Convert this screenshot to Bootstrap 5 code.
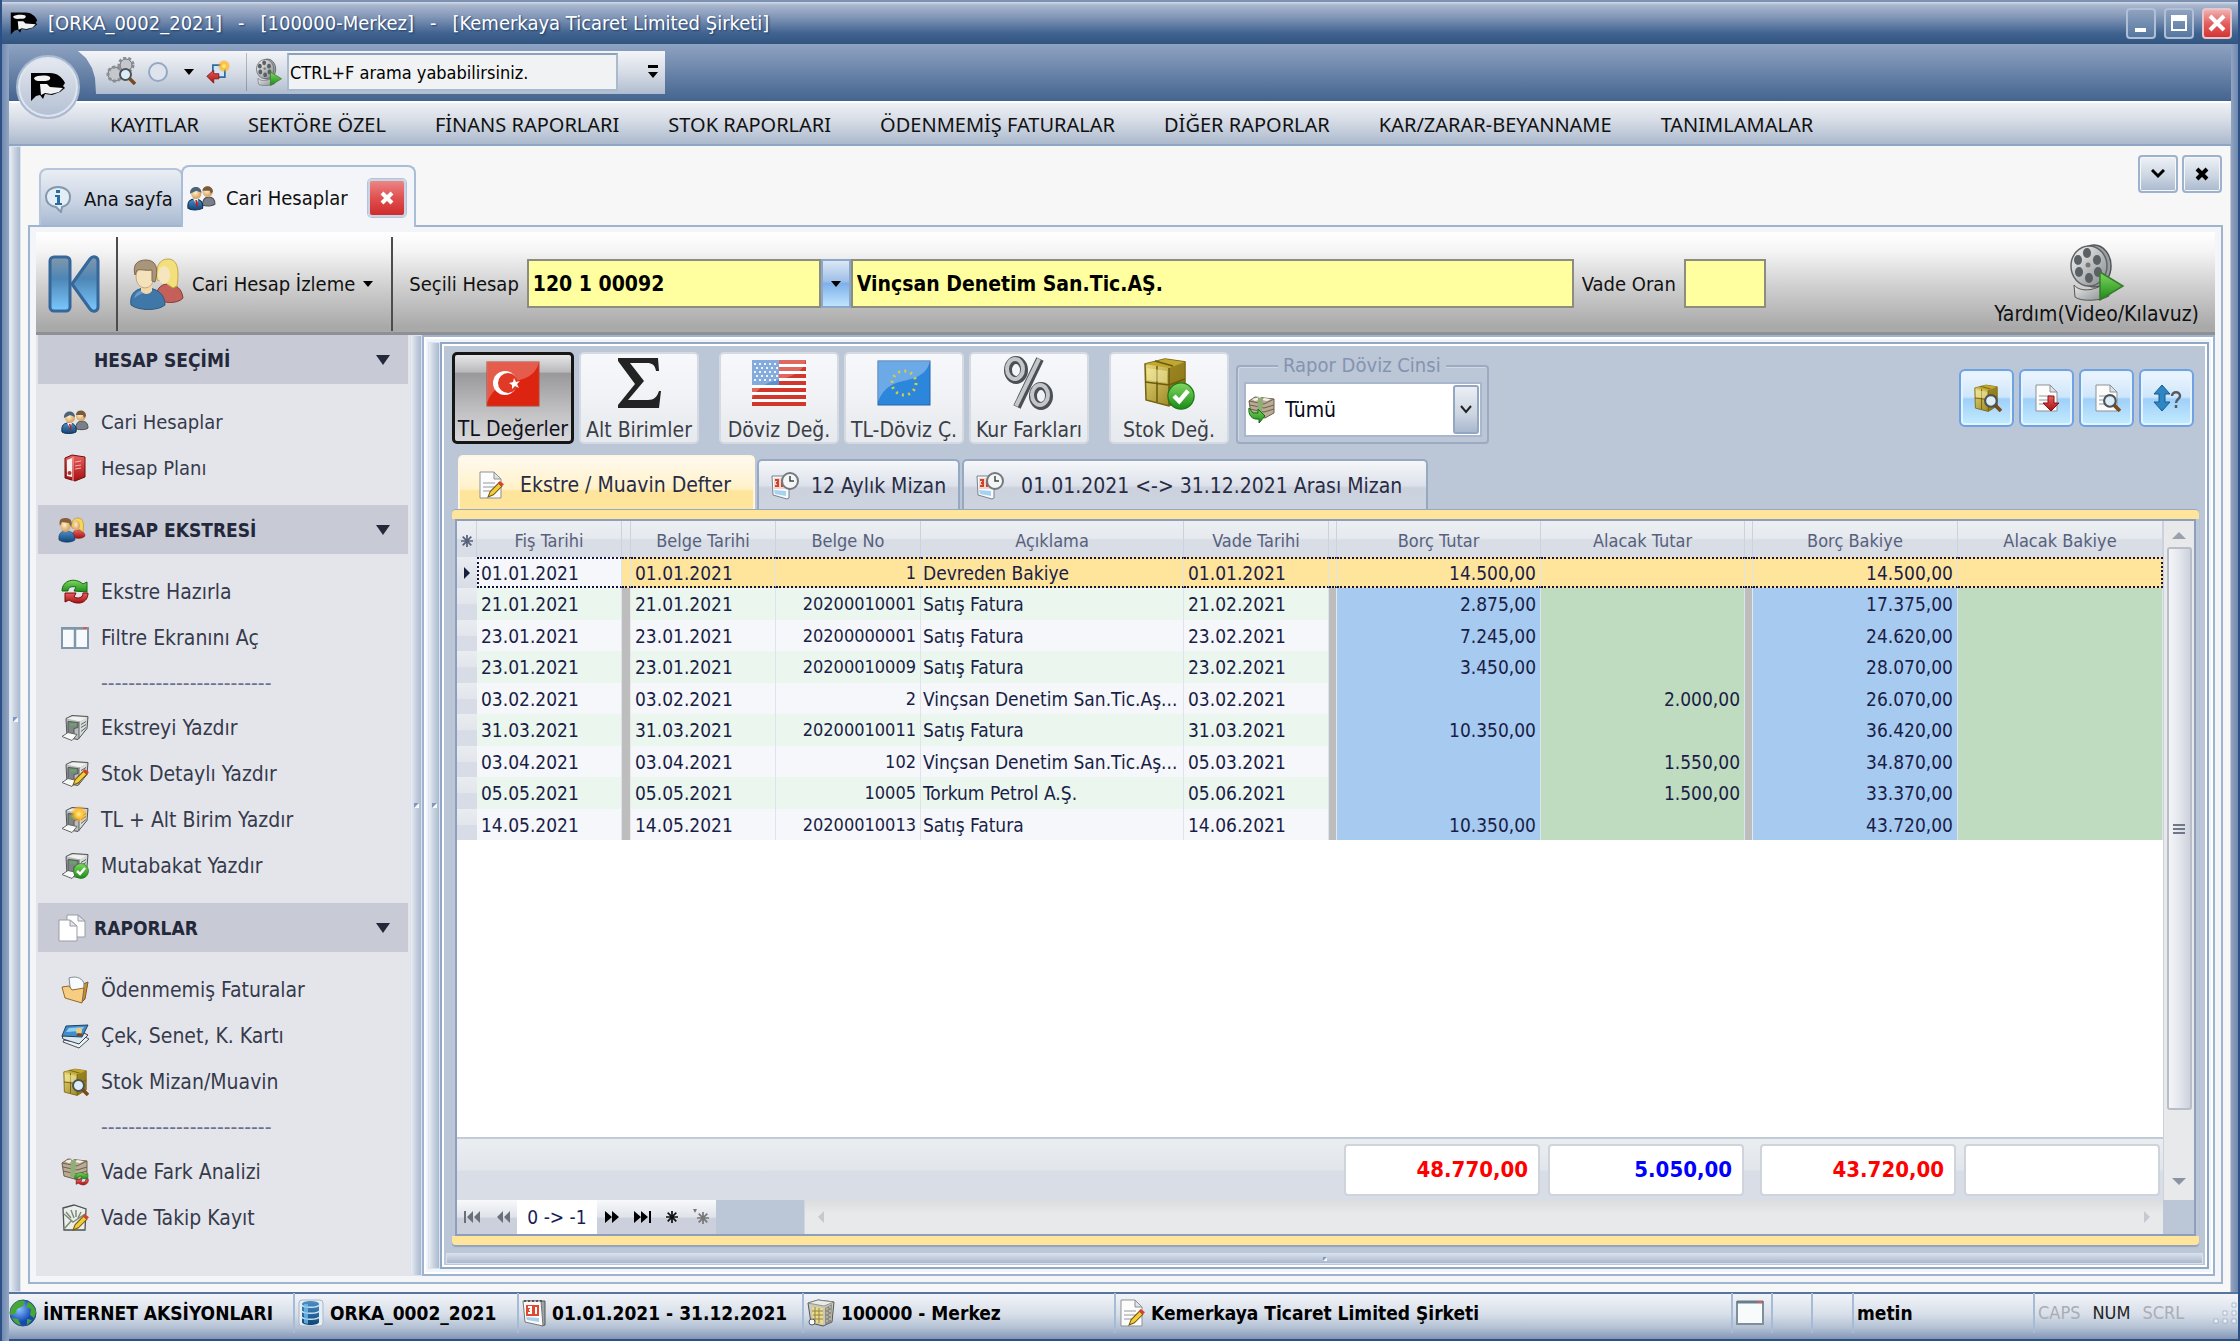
<!DOCTYPE html>
<html lang="tr">
<head>
<meta charset="utf-8">
<meta name="viewport" content="width=device-width, initial-scale=1">
<title>Cari Hesaplar</title>
<link href="https://cdn.jsdelivr.net/npm/bootstrap@5.3.0/dist/css/bootstrap.min.css" rel="stylesheet">
<style>
:root{--line:#93a9c6;--ui:"DejaVu Sans Condensed","DejaVu Sans",sans-serif}
body{font-family:var(--ui);font-size:20px;line-height:24px;color:#111;background:#8ba0be}
svg{display:block;flex:none}
button,input,select{font-family:inherit}
button{padding:0;color:inherit}
a{color:inherit;text-decoration:none}
.win{min-height:100vh;border-left:2px solid #2c5085;border-right:2px solid #2c5085;background:linear-gradient(90deg,#6f89b0,#92a5c1 7px,#92a5c1 calc(100% - 7px),#6f89b0)}
.titlebar{height:44px;border-top:2px solid #7d91b3;background:linear-gradient(#d3dbe8 0,#a9b7ce 3px,#8397b8 35%,#3f628f 75%,#31557f 100%);color:#fff;text-shadow:1px 1px 2px #1c3b66;padding:0 6px 0 8px;gap:8px;white-space:nowrap}
.titleparts{gap:16px;padding-left:2px}
.winbtn{width:30px;height:31px;border:2px solid #aebfd6;border-radius:4px;background:linear-gradient(#8fa2bf,#56779f);display:grid;place-items:center}
.winbtn.close-x{background:linear-gradient(#f0b0b0,#e26060 50%,#d33434);border-color:#e9c4ca}
.inner{margin:0 7px}
.topbar{height:57px;background:linear-gradient(#8fa3c2,#44648f);position:relative;padding:7px 0 6px 69px}
.orb{position:absolute;left:7px;top:11px;width:64px;height:64px;border-radius:50%;border:2px solid #a9bad1;background:linear-gradient(#e6eaf1,#ccd4e1 50%,#b3c0d3);box-shadow:inset 0 0 0 2px #dfe5ee;display:grid;place-items:center;z-index:3}
.quick{height:43px;width:587px;background:linear-gradient(#f3f5f8,#d3d9e3 55%,#afbccf);clip-path:polygon(0 0,100% 0,100% 100%,18px 100%,17px 27px,14px 17px,8px 7px);padding:2px 0 3px 28px}
.quick input{width:331px;height:38px;border:2px solid #a8bace;border-top-color:#8aa2c2;background:#f0f2f3;font-size:18px;padding:0 1px;color:#000}
.caret{width:0;height:0;border:5px solid transparent;border-top:6px solid #000;border-bottom:0}
.menubar{height:45px;border-top:2px solid #fff;border-bottom:2px solid #8ea5c4;background:linear-gradient(#eef1f5,#d5dbe5 45%,#abb9cd);padding:3px 0 0 101px;gap:49px;font-family:"Noto Sans",sans-serif;font-size:20px;color:#111}
.strip{width:12px;background:linear-gradient(90deg,#e9eef5,#d3dbe6 30%,#a9b9cf);border:1px solid #dbe3ee;flex:none;display:flex;align-items:center;justify-content:center}
.strip::after{content:"";width:5px;height:5px;border:2px solid #f6f9fc;border-top-color:#7f98bb;border-left-color:#7f98bb}
.work{background:#f7f7f7;padding:0 7px 8px;border-right:1px solid #c9cccf}
.doctabs{height:79px;padding-left:11px}
.doctab{border:2px solid #b5c5da;border-bottom:0;border-radius:8px 8px 0 0;height:57px;width:144px;background:linear-gradient(#eaeef4,#cbd5e4 55%,#a9bad2);padding:2px 0 0 3px;gap:12px}
.doctab.on{height:62px;width:235px;background:#f3f5f8;margin:0 0 -2px -2px;padding-left:4px;gap:10px;position:relative;border-color:#aabdd6}
.doctools{padding:9px 1px 0 0;gap:4px}
.tclose{width:38px;height:38px;border:2px solid #c9d3e2;border-radius:4px;background:linear-gradient(#ec8585,#e05050 50%,#cf2c2c);box-shadow:0 0 0 1px #b4c3d7;display:grid;place-items:center}
.tool2{width:40px;height:38px;border:2px solid #9fb2cc;border-radius:4px;background:linear-gradient(#eef1f6,#cdd6e3 55%,#a9b9cf);box-shadow:inset 0 0 0 1px #f5f7fa;display:grid;place-items:center}
.panel{border:2px solid #9fb4cf;background:#f3f5f8;padding:5px 6px 6px}
.toolstrip{height:103px;background:linear-gradient(#fff 0,#f4f4f4 20%,#cfcfcf 55%,#a9a9a9 95%);border-bottom:3px solid #8e9093;padding-top:3px}
.vline{width:2px;height:94px;background:#4c4c4c}
.yin{height:49px;border:2px solid #8c8c80;background:#ffff9f;font-weight:700;font-size:21px;padding:0 4px;color:#000}
.combo-btn{width:30px;height:49px;border:2px solid #8aa6c9;background:linear-gradient(#dbe7f5,#9fc0e8 45%,#7eb0ea 50%,#bfe4fd);display:grid;place-items:center}
.pickbtn{margin-right:2px}
.helptext{font-size:21px}
.side{width:374px;background:#e4e5eb;padding:0 2px 0 2px;color:#363b4c;flex:none}
.side h2{height:49px;margin:0;background:#c8cad6;font-size:19px;font-weight:700;color:#23283a;padding:0 18px 0 20px;line-height:24px}
.side h2 .ic{width:36px}
.side h2 .caret{border-width:10px 7px 0;border-top-color:#23283a}
.side ul{list-style:none;margin:0;padding:15px 0 14px 23px}
.side li{height:46px;display:flex;align-items:center;font-size:21px}
.side ul.first li{font-size:20px}
.side li a{display:flex;align-items:center;gap:12px}
.side li.dash{padding-left:40px;color:#6a7090;height:44px}
.box1{border:2px solid #9db3cf;background:#f1f4f8;padding:5px 4px 5px 4px;box-shadow:inset 0 0 0 2px #fff}
.box2{border:2px solid #8fa8c6;box-shadow:inset 0 0 0 2px #fff;background:#bbc6d7;padding:8px 8px 3px 10px}
.bigs{gap:5px}
.big{width:120px;height:92px;border:2px solid #d5dae2;border-radius:5px;background:linear-gradient(#f6f8fb,#f0f2f5 50%,#e6e9ed);font-size:21px;color:#3b3f47;display:flex;flex-direction:column;align-items:center;justify-content:space-between;white-space:nowrap;line-height:24px}
.big.on{width:122px;border:3px solid #161616;background:linear-gradient(#e6e6e8,#b9b9bb 20%,#99999b 21%,#c4c4c6 70%,#d8d8da);color:#101020}
.big.grp{margin-left:15px}
.big .pic{height:58px;display:grid;place-items:center}
fieldset.fx{border:2px solid #9dabc2;border-radius:4px;width:253px;height:79px;margin:13px 0 0 2px;box-shadow:inset 1px 1px 0 #cfd8e5;padding:15px 0 0 6px;position:relative}
fieldset.fx legend{position:absolute;top:-14px;left:40px;width:auto;margin:0;padding:0 5px;font-size:20px;line-height:24px;color:#8593b0;background:#bbc6d7;float:none}
.selwrap{position:relative;width:238px}
.selwrap select{appearance:none;width:238px;height:55px;border:2px solid #a9b7cc;background:#fff;font-size:21px;padding:0 0 0 39px;color:#0a0a20;border-radius:0}
.selwrap .lft{position:absolute;left:4px;top:14px;pointer-events:none}
.selwrap .rgt{position:absolute;right:3px;top:3px;width:26px;height:49px;pointer-events:none;border:2px solid #93a6c2;border-radius:3px;background:linear-gradient(#eceff4,#ccd5e1 60%,#a9b8ce);display:grid;place-items:center}
.sqs{gap:5px;padding:17px 5px 0 0}
.sq{width:55px;height:58px;border:2px solid #6ea2e2;border-radius:6px;background:linear-gradient(#eef6fe,#cfe6fb 48%,#9fd0fa 52%,#c4ecff);box-shadow:inset 0 0 0 2px #e3f3ff;display:grid;place-items:center}
.gtabs{margin-top:11px;padding-left:6px}
.gtab{height:51px;border:2px solid #97a8c3;border-bottom:0;border-radius:5px 5px 0 0;background:linear-gradient(#f5f7f9,#dde1ea 50%,#ccd1de 55%,#cdd3df);font-size:21px;color:#272c44;padding:0 12px;gap:12px;white-space:nowrap;margin-left:2px}
.gtab.on{height:55px;background:linear-gradient(#fffaf0,#fff1c8 60%,#ffe49c 64%);border-color:#fff6dd;margin:0;padding:3px 22px 0 18px;gap:16px}
.gtab.wide{padding-right:24px;gap:17px}
.gframe{border-top:9px solid #ffe49c;border-bottom:9px solid #ffe49c;border-radius:4px;box-shadow:0 -1px 0 #97a8c3,0 2px 1px #94a4bf}
.gbox{border:2px solid #8f9fbb;margin:0 3px;background:#fff}
table.grid{table-layout:fixed;width:100%;border-collapse:separate;border-spacing:0;font-size:18px;line-height:22px;color:#1a1e46}
.grid th{height:36px;font-weight:400;text-align:center;color:#56617c;background:linear-gradient(#eceff2,#e6e9ee 48%,#d9dde6 52%);padding:3px 0 0;border-right:1px solid #cdd3de}
.grid td{height:31px;padding:0 4px;white-space:nowrap;overflow:hidden;background:#f5f7fa;border-right:1px solid #dfe3ec}
.grid tr:nth-child(even) td{height:32px;background:#ebf6ee}
.grid tr td.gap{background:#bdbdbd;padding:0;border-color:#e8e8e8}
.grid tr td:first-child{background:linear-gradient(#e9ecf0,#e2e5eb 50%,#d8dce6 52%);padding:0;border:0}
.grid .d,.grid .n,.grid td:nth-child(6){font-size:19px}
.grid td:nth-child(6){padding:0 2px}
.grid .n,.grid .r{text-align:right}
.grid tr td.b{background:#a6caf0}.grid tr td.g{background:#c0dcc0}
.grid tr.sel td{background:#ffe49c;border-top:2px dotted #14143c;border-bottom:2px dotted #14143c}
.grid tr.sel td:first-child{background:linear-gradient(#e9ecf0,#d8dce6);border:0}
.grid tr.sel td.cur{background:#f5f7fa;border-left:2px dotted #14143c;padding-left:2px}
.grid tr.sel td:last-child{border-right:2px dotted #14143c}
.vscroll{flex:none;width:31px;background:#e8e9eb;border-left:1px solid #cdd2da;padding:11px 0 8px}
.vthumb{flex:1;width:25px;border:2px solid #b9bdc8;border-radius:3px;background:linear-gradient(90deg,#f4f5f8,#e3e6ec 50%,#ccd1dd);display:grid;place-items:center}
.tri{width:0;height:0;border:7px solid transparent}
.tri.up{border-bottom-color:#9aa0ac;margin-top:-7px}
.tri.down{border-top-color:#8b93a4;margin-top:60px}
.sum{height:63px;border-top:2px solid #c3cbda;background:linear-gradient(#eaeef1,#e2e6eb 50%,#d9dde6 53%);padding-right:3px}
.sumbox{height:52px;width:196px;border:2px solid #cfd3dc;border-radius:4px;background:#fff;font-weight:700;font-size:22px;color:#f00;text-align:right;padding:0 10px;line-height:48px}
.sumbox.credit{color:#00f}
.navrow{height:34px;background:#bbc6d7}
.navg{width:259px;background:linear-gradient(#f8f9fb,#dfe3ea 50%,#cbd0dc 54%)}
.navg .prev{width:60px}
.navg span.pos{background:#fff;width:80px;font-size:19px;line-height:34px;text-align:center;color:#16205a}
.hscroll{background:linear-gradient(#dcdddf,#e8e9eb 40%);border-left:1px solid #d3d6dc;padding:0 12px;margin:0 31px 0 88px}
.hsplit{height:11px;margin:8px -4px 0 -6px;background:linear-gradient(#d7deea,#a9b8ce);border:1px solid #d9e0ea;display:grid;place-items:center}
.hsplit::after{content:"";width:4px;height:4px;border:2px solid #f6f9fc;border-top-color:#7f98bb;border-left-color:#7f98bb}
.status{height:49px;border-top:2px solid #55749f;border-bottom:2px solid #2c5085;background:linear-gradient(#f2f4f8,#d8dfe9 45%,#b3c1d4 75%,#8296b6);font-weight:700;font-size:19px;color:#000;padding-bottom:7px;margin-right:-7px}
.status .seg{height:40px;border-left:2px solid #a6bbd5;padding-left:3px;display:flex;align-items:center;gap:6px;white-space:nowrap}
.status .keys{font-weight:400;font-size:18px;gap:12px;color:#a9adb5}
.status .keys .lit{color:#222}
</style>
<script src="https://cdn.jsdelivr.net/npm/bootstrap@5.3.0/dist/js/bootstrap.bundle.min.js"></script>
</head>
<body>
<svg width="0" height="0" class="position-absolute" aria-hidden="true">
<defs>
<linearGradient id="gBlue" x2="0" y2="1"><stop stop-color="#4f8fc4"/><stop offset="1" stop-color="#0f4478"/></linearGradient>
<linearGradient id="gRed" x2="0" y2="1"><stop stop-color="#e86060"/><stop offset="1" stop-color="#a51010"/></linearGradient>
<linearGradient id="gGreen" x2="0" y2="1"><stop stop-color="#7fd860"/><stop offset="1" stop-color="#1c8a18"/></linearGradient>
<linearGradient id="gMetal" x2="1" y2="1"><stop stop-color="#f6f7f7"/><stop offset="1" stop-color="#85898c"/></linearGradient>
<linearGradient id="gGold" x2="1" y2="1"><stop stop-color="#ecdf80"/><stop offset="1" stop-color="#8c7410"/></linearGradient>
<linearGradient id="gK" x2="0" y2="1"><stop stop-color="#8298ac"/><stop offset=".4" stop-color="#4d86b5"/><stop offset="1" stop-color="#7cc8ff"/></linearGradient>
<radialGradient id="gFace" cx=".4" cy=".4"><stop stop-color="#fff0c8"/><stop offset="1" stop-color="#dcaa6c"/></radialGradient>
<radialGradient id="gSun"><stop stop-color="#fff29a"/><stop offset=".5" stop-color="#ffc02c"/><stop offset="1" stop-color="#ff9a10" stop-opacity=".2"/></radialGradient>
<radialGradient id="gSea" cx=".35" cy=".35"><stop stop-color="#8cc4ff"/><stop offset="1" stop-color="#1648b8"/></radialGradient>
</defs>
<symbol id="orca" viewBox="0 0 36 30"><path fill="#000" d="M1 1h19c7 0 12 4 15 10l-2 3 2 2-5 4-8 3-7-1-2 5-3-4-4 1-5 5z"/><path fill="#f2f2f2" d="M4 6c3-3 13-3 16-1 1 3-2 4-6 4S5 10 4 6zM10 12l7 0 3 3 13 1-4 4-8 2-6-1-4 2z"/></symbol>
<symbol id="men" viewBox="0 0 28 24"><path fill="#7a8088" stroke="#4a4e54" d="M15 19c0-6 2-8 6-8s6 3 6 7c-2 2-8 2-12 1z"/><circle cx="20" cy="6" r="5" fill="url(#gFace)"/><path fill="#7a5a3a" d="M15 5c0-6 10-6 10 1l-2 2-1-3z"/><path fill="url(#gBlue)" stroke="#0c2f52" d="M1 22c-1-7 2-9 7-9s8 3 7 9c-4 2-11 2-14 0z"/><path fill="#f4f4f4" d="M6 13l3 5 2-5z"/><path fill="#c81818" d="M8 14h1.500l1 5-1.500 2z"/><circle cx="9" cy="8" r="5" fill="url(#gFace)"/><path fill="#4c6478" d="M3 8C2 0 14-1 14 7l-5-2z"/></symbol>
<symbol id="pair" viewBox="0 0 28 26"><path fill="url(#gRed)" stroke="#8a1a12" stroke-width=".5" d="M14 20c0-5 2-7 6-7s7 3 7 6c-2 3-9 3-13 1z"/><path fill="#f5d75a" stroke="#b8932a" stroke-width=".7" d="M14 11c-1-7 2-10 6-10 6 0 6 7 5 14l-4-3z"/><ellipse cx="18.500" cy="8.500" rx="3.500" ry="5" fill="url(#gFace)"/><path fill="url(#gBlue)" stroke="#0c2f52" stroke-width=".5" d="M1 23c-1-6 2-9 7-9 6 0 9 3 9 9-4 3-12 3-16 0z"/><ellipse cx="7.500" cy="9" rx="5" ry="6" fill="url(#gFace)"/><path fill="#86603a" d="M2 9C0 1 5 1 8 1c5 0 7 4 5 9L11 6 4 5z"/></symbol>
<symbol id="pairlg" viewBox="0 0 54 52"><path fill="#c4605a" stroke="#8a3a34" d="M26 40c0-8 4-14 12-14s14 5 15 14c-5 6-20 6-27 0z"/><path fill="#f3e07c" stroke="#c2a548" d="M27 22C25 8 30 1 38 1c11 0 11 14 9 27l-4 2-9-6z"/><ellipse cx="34" cy="17" rx="6" ry="9" fill="#f6e6c0"/><path fill="#3f78a8" stroke="#2c5b84" d="M1 47c-2-12 6-17 15-17 11 0 19 6 19 17-7 6-26 6-34 0z"/><path fill="#6c9cc6" d="M4 40c2-6 6-8 10-8l6 2c-8 0-12 4-16 6z"/><path fill="#f0d8ac" d="M11 27h11v6c-3 4-8 4-11 0z"/><ellipse cx="15" cy="19" rx="9" ry="11" fill="#f4e2bc" stroke="#c9a878"/><path fill="#a9957a" stroke="#7d6a50" d="M5 17C2 5 9 2 16 2c10 0 13 8 9 22l-3-1V12c-6 1-11-1-15 0z"/></symbol>
<symbol id="binder" viewBox="0 0 28 28"><path fill="url(#gRed)" stroke="#6f0d0d" d="M4 4l7-3 13 2v20l-10 4L4 24z"/><path fill="#f3f3f3" d="M6 6l5-2v19l-5-1z"/><path stroke="#ffb0b0" d="M14 8l6-1M14 12l6-1M14 15l6-1M12 3v24"/><circle cx="8.500" cy="19" r="2" fill="#a33"/></symbol>
<symbol id="sync" viewBox="0 0 28 26"><path fill="url(#gRed)" stroke="#7a0808" d="M27 14h-5c0 5-5 6-9 4l2-4H4v9l4-2c9 6 19 3 19-7z"/><path fill="url(#gGreen)" stroke="#156810" d="M1 12h6c0-4 4-5 8-4l-2 4 13 1V3l-4 2C14-2 1 1 1 12z"/></symbol>
<symbol id="cols" viewBox="0 0 28 24"><path fill="#f6fafc" stroke="#7f97a8" stroke-width="2" d="M1 2h26v20H1z"/><path stroke="#7f97a8" stroke-width="2.500" d="M14 3v19M1 2.500h26"/><path stroke="#e05a4a" stroke-width="2" d="M22 2h4"/></symbol>
<symbol id="prn" viewBox="0 0 28 27"><path fill="#b9bebc" stroke="#4f5656" d="M5 4l6-3 16 1-1 12-9 11-11-2z"/><path fill="#f0f2f1" d="M6 4l6-2 14 1-7 4z"/><path fill="#7d8684" stroke="#555" d="M7 7l10 1v5l-4 1v6l-6-1z"/><path fill="#d9dddb" d="M18 8l8-5-1 11-7 9z"/><path stroke="#5a6260" d="M18 7v17M20 10l5-3M20 13l5-3M20 17l5-4"/><path fill="#f8f9f9" stroke="#666" d="M1 22l6-4 9 2-5 6z"/><path fill="#5fae60" d="M9 9h6v2H9z"/></symbol>
<symbol id="pen" viewBox="0 0 16 16"><path fill="#f2cf3a" stroke="#7a5a10" d="M1 15l2-5 8-8 3 3-8 8z"/><path fill="#d8402c" d="M10 2l2-2 4 3-2 2z"/></symbol>
<symbol id="ok" viewBox="0 0 16 16"><circle cx="8" cy="8" r="7.500" fill="url(#gGreen)" stroke="#1b7a18" stroke-width=".7"/><path fill="none" stroke="#fff" stroke-width="2.500" d="M4 8l3 3 5-6"/></symbol>
<symbol id="docs" viewBox="0 0 28 28"><path fill="#fdfdfd" stroke="#999da4" d="M9 1h11l7 6v16H9z"/><path fill="#fff" stroke="#999da4" d="M1 6h11l7 6v15H1z"/><path fill="#e3e6ea" stroke="#999da4" d="M12 6v6h7zM20 1v6h7z"/></symbol>
<symbol id="fold" viewBox="0 0 28 28"><path fill="#c98f34" stroke="#7f5a1e" d="M20 9l7-3-3 17-4 4z"/><path fill="#f8fbfd" stroke="#7b8894" d="M8 2c6-2 12-1 15 5l-1 17-12-5z"/><path fill="#f6cd83" stroke="#94692a" d="M1 11l7-1 3 4 12-2-2 15L4 22z"/></symbol>
<symbol id="cards" viewBox="0 0 28 25"><path fill="#eef2f5" stroke="#49525a" d="M3 16l5 1 16-4 4 2-10 9L2 18z"/><path fill="#dbe8f0" stroke="#34424e" d="M1 12l22-3 4 2-9 9L2 15z"/><path fill="#3f8dca" stroke="#23405c" d="M5 2l22-1-6 12L1 12z"/><path fill="#8fd0f4" d="M8 4l15-1-3 4-15 1z"/><circle cx="18" cy="7" r="3" fill="#f3c978"/><path fill="#6d4a2a" d="M15 12l2-3 5 1-1 2z"/></symbol>
<symbol id="crate" viewBox="0 0 44 50"><path fill="url(#gGold)" stroke="#76620f" stroke-width="1.500" d="M2 7l20-5 20 3v34L26 49 3 43z"/><path fill="#c0a730" d="M2 7l20-5 20 3-16 6z"/><path fill="#8b7412" d="M26 11l16-6v34l-16 10z" opacity=".75"/><path fill="none" stroke="#6b5a10" stroke-width="1.500" d="M14 9v36M26 11v37M2 25l24 3 16-6M12 4l18 5"/><path fill="#fff8b8" opacity=".45" d="M4 11l20 3v12L4 23z"/></symbol>
<symbol id="lens" viewBox="0 0 18 18"><path stroke="#7a4a1a" stroke-width="3.500" d="M11 11l6 6"/><circle cx="7.500" cy="7.500" r="5.500" fill="#dbeef8" stroke="#4d5358" stroke-width="2"/></symbol>
<symbol id="cash" viewBox="0 0 28 28"><path fill="#b9ab94" stroke="#6c604c" d="M1 5l6-4 19 2v14l-9 5-14-4z"/><path stroke="#6c604c" fill="none" d="M2 9l14 3 10-3M2 13l14 3 10-3M1 5l15 3 10-5"/><path fill="#f3f0e8" d="M4 3l8-2 3 2-8 2zM16 2l7 1-4 2-5-1z"/><path fill="#8fae76" d="M10 2h5l-1 18-5-2z"/></symbol>
<symbol id="note" viewBox="0 0 28 28"><path fill="#eceeec" stroke="#4e5250" stroke-width="1.300" d="M2 4l11-3 12 4-1 21H3z"/><path stroke="#7c8c78" stroke-width="1.500" fill="none" d="M5 8l5 6M10 6l3 8M15 6v7M20 8l-3 6M3 10l9 8 12-8M3 25l8-9"/></symbol>
<symbol id="globe" viewBox="0 0 28 28"><circle cx="14" cy="14" r="13" fill="url(#gSea)" stroke="#28507a"/><path fill="#46a832" d="M5 5c3-4 9-4 11-3l-2 5-6 3-2 5-5 1c0-4 1-8 4-11zM19 3c4 1 7 6 8 10l-2 6-4-3 1-6-5-2zM3 19l6 1 3 6c-4 0-7-3-9-7zM18 20l5 1-5 5z"/></symbol>
<symbol id="db" viewBox="0 0 26 28"><rect x="1" y="1" width="24" height="26" rx="3" fill="#e6edf3" stroke="#a7b7c6"/><path fill="url(#gBlue)" d="M4 5c0-4 17-4 17 0v18c0 4-17 4-17 0z"/><path fill="none" stroke="#c4e6fa" stroke-width="1.500" d="M4 6c1 3 16 3 17 0M4 12c1 3 16 3 17 0M4 18c1 3 16 3 17 0"/><path fill="#7cc7f4" opacity=".7" d="M6 5h4v20l-4-1z"/></symbol>
<symbol id="cal" viewBox="0 0 24 28"><path fill="#9da4a8" stroke="#555" d="M3 2h20v24l-3 1z"/><path fill="#fafafa" stroke="#777" d="M1 2h18l2 25-18-4z"/><path fill="#de4a30" d="M4 6h13v11H4z"/><path fill="none" stroke="#fff" stroke-width="2" d="M6 8h3v6H6M7 11h2M14 8v7"/><path fill="#a8d0ee" d="M4 18l13 1v4L5 21z"/><path stroke="#555" stroke-dasharray="2 2" stroke-width="2" d="M2 2h20"/></symbol>
<symbol id="bldg" viewBox="0 0 28 28"><path fill="#c8c8bf" stroke="#55554e" d="M1 4l10-3 16 2-2 20-9 4-12-3z"/><path fill="#f0dc7c" d="M5 8l11 1v16l-10-2z"/><path stroke="#8a8358" d="M8 8v15M12 9v15M5 12h11M6 16h10M6 20h10"/><path fill="#8b8d8c" d="M18 9l7-4-1 18-6 3z"/><path stroke="#e6d489" stroke-dasharray="2 2" d="M20 9v16M23 7v15"/><path fill="#e9ebea" stroke="#77776e" stroke-width=".7" d="M1 4l10-3 16 2-10 4z"/><circle cx="5" cy="23" r="3" fill="#fafafa" stroke="#555"/></symbol>
<symbol id="page" viewBox="0 0 24 28"><path fill="#fcfcfc" stroke="#8d9196" d="M1 1h14l7 7v19H1z"/><path fill="#dfe3e6" stroke="#8d9196" d="M15 1v7h7z"/><path stroke="#b6babf" stroke-width="1.500" d="M4 12h12M4 16h12M4 20h8"/></symbol>
<symbol id="calclk" viewBox="0 0 28 28"><path fill="#f7fafc" stroke="#78828c" d="M1 4h17v22l-2 1-14-4z"/><path fill="#f3d4cc" d="M3 6h12v11H3z"/><path fill="none" stroke="#d0442e" stroke-width="2" d="M4 8h3v6H4M5 11h2M11 8v7"/><path fill="#a8d3f0" d="M3 18l12 1v5L4 22z"/><circle cx="19" cy="9" r="8" fill="#f3f5f6" stroke="#73797e" stroke-width="2"/><path fill="none" stroke="#444" stroke-width="1.500" d="M19 4v5h4"/></symbol>
<symbol id="film" viewBox="0 0 56 58"><path fill="url(#gMetal)" stroke="#555" d="M5 42c6 8 25 6 33-5l2 16c-8 5-28 6-34 1z"/><ellipse cx="25" cy="23" rx="17" ry="21" fill="#9b9fa1" stroke="#4f5355" stroke-width="1.500"/><ellipse cx="20" cy="23" rx="18" ry="20" fill="url(#gMetal)" stroke="#606466" stroke-width="1.500"/><g fill="#5a6064"><ellipse cx="18" cy="10" rx="4" ry="5"/><ellipse cx="28" cy="17" rx="4" ry="5"/><ellipse cx="9" cy="17" rx="4" ry="5"/><ellipse cx="10" cy="29" rx="4" ry="5"/><ellipse cx="20" cy="35" rx="4" ry="5"/><ellipse cx="29" cy="29" rx="4" ry="5"/></g><circle cx="19" cy="22" r="2.500" fill="#777"/><path fill="url(#gGreen)" stroke="#3a7a2e" stroke-width="1.500" d="M31 29l23 14-23 14z"/></symbol>
<symbol id="tri2" viewBox="0 0 14 12"><path d="M0 0l7 6-7 6zM7 0l7 6-7 6z"/></symbol>
<symbol id="star" viewBox="0 0 14 14"><path fill="none" stroke="currentColor" stroke-width="2" d="M7 0v14M0 7h14M2 2l10 10M12 2L2 12"/></symbol>
</svg>

<div class="win d-flex flex-column">
  <header class="titlebar d-flex align-items-center">
    <svg width="28" height="25"><use href="#orca"/></svg>
    <div class="titleparts d-flex flex-grow-1"><span>[ORKA_0002_2021]</span><span>-</span><span>[100000-Merkez]</span><span>-</span><span>[Kemerkaya Ticaret Limited Şirketi]</span></div>
    <button class="winbtn" aria-label="Küçült"><svg width="20" height="20"><path fill="#fff" d="M4 15h11v4H4z"/></svg></button>
    <button class="winbtn" aria-label="Büyüt"><svg width="18" height="18"><path fill="none" stroke="#fff" stroke-width="2" d="M2 2h14v14H2z"/><path fill="#fff" d="M1 1h16v6H1z"/></svg></button>
    <button class="winbtn close-x" aria-label="Kapat"><svg width="18" height="18"><path stroke="#fff" stroke-width="4" d="M2 2l14 14M16 2L2 16"/></svg></button>
  </header>

  <div class="inner d-flex flex-column flex-grow-1">
    <div class="topbar">
      <button class="orb" aria-label="Ana menü"><svg width="36" height="30"><use href="#orca"/></svg></button>
      <div class="quick d-flex align-items-center">
        <svg width="30" height="30" viewBox="0 0 30 30"><g fill="#c4c8cc" stroke="#6a6e72"><circle cx="20" cy="8" r="6"/><circle cx="9" cy="17" r="7"/></g><g fill="none" stroke="#8a8e92" stroke-dasharray="3 2" stroke-width="3"><circle cx="20" cy="8" r="7"/><circle cx="9" cy="17" r="7"/></g><svg x="12" y="10" width="18" height="18"><use href="#lens"/></svg></svg>
        <svg width="24" height="24" class="ms-2 me-3"><circle cx="14" cy="12" r="9" fill="#dfe4ec" stroke="#94a8c5" stroke-width="2"/></svg>
        <span class="caret"></span>
        <svg width="28" height="28" viewBox="0 0 28 28" class="ms-2 ps-1"><path fill="#cfe6f6" stroke="#2f6c9c" stroke-width="2" d="M8 6h14v14H8z"/><circle cx="21" cy="7" r="7" fill="url(#gSun)"/><path fill="url(#gRed)" stroke="#8c1010" d="M1 19l8-7v4h6v6H9v5z"/></svg>
        <span class="vr ms-3 me-2"></span>
        <svg width="28" height="28" class="me-1"><use href="#film"/></svg>
        <input type="text" aria-label="Arama" value="CTRL+F arama yababilirsiniz.">
        <svg width="16" height="16" class="ms-auto me-1"><path d="M3 1h10v3H3zM3 8h10l-5 6z"/></svg>
      </div>
    </div>
    <nav class="menubar d-flex align-items-center">
      <a href="#">KAYITLAR</a><a href="#">SEKTÖRE ÖZEL</a><a href="#">FİNANS RAPORLARI</a><a href="#">STOK RAPORLARI</a><a href="#">ÖDENMEMİŞ FATURALAR</a><a href="#">DİĞER RAPORLAR</a><a href="#">KAR/ZARAR-BEYANNAME</a><a href="#">TANIMLAMALAR</a>
    </nav>

    <div class="d-flex flex-grow-1">
      <div class="strip"></div>
      <div class="work flex-grow-1 d-flex flex-column">
        <div class="doctabs d-flex align-items-end">
          <a href="#" class="doctab d-flex align-items-center">
            <svg width="28" height="28" viewBox="0 0 28 28"><path fill="#e3edf5" stroke="#8398ab" stroke-width="2" d="M14 2c7 0 12 4 12 10s-4 9-8 10l-1 5-5-5C6 21 2 18 2 12S7 2 14 2z"/><path fill="#2a6da5" d="M12 5h4v3h-4zM11 10h5v8h2v2h-7v-2h2v-6h-2z"/></svg>
            <span>Ana sayfa</span></a>
          <div class="doctab on d-flex align-items-center">
            <svg width="29" height="26"><use href="#men"/></svg><span>Cari Hesaplar</span>
            <button class="tclose ms-auto me-2" aria-label="Sekmeyi kapat"><svg width="14" height="14"><path stroke="#fff" stroke-width="4" d="M2 2l10 10M12 2L2 12"/></svg></button>
          </div>
          <div class="doctools ms-auto align-self-start d-flex">
            <button class="tool2" aria-label="Sekme listesi"><svg width="14" height="10"><path fill="none" stroke="#000" stroke-width="3" d="M1 1l6 6 6-6"/></svg></button>
            <button class="tool2" aria-label="Kapat"><svg width="14" height="14"><path stroke="#000" stroke-width="4" d="M2 2l10 10M12 2L2 12"/></svg></button>
          </div>
        </div>

        <div class="panel flex-grow-1 d-flex flex-column">
          <div class="toolstrip d-flex align-items-center">
            <button class="border-0 bg-transparent px-2 ms-1 me-2" aria-label="İlk"><svg width="52" height="58" viewBox="0 0 52 58"><g fill="url(#gK)" stroke="#35679a" stroke-width="3" stroke-linejoin="round"><rect x="2" y="2" width="20" height="54" rx="4"/><path d="M24 29L42 4c3-4 8-2 8 2v46c0 4-5 6-8 2z"/></g></svg></button>
            <span class="vline"></span>
            <button class="border-0 bg-transparent d-flex align-items-center gap-2 ms-2 ps-1 pickbtn">
              <svg width="54" height="52"><use href="#pairlg"/></svg><span>Cari Hesap İzleme</span><span class="caret"></span></button>
            <span class="vline mx-3"></span>
            <label for="acc" class="me-2">Seçili Hesap</label>
            <input id="acc" class="yin" style="width:294px" value="120 1 00092">
            <button class="combo-btn" aria-label="Hesap seç"><span class="caret"></span></button>
            <input class="yin" style="width:723px" aria-label="Hesap adı" value="Vinçsan Denetim San.Tic.AŞ.">
            <label for="vo" class="mx-2">Vade Oran</label>
            <input id="vo" class="yin" style="width:82px">
            <button class="border-0 bg-transparent ms-auto me-3 d-flex flex-column align-items-center helptext"><svg width="56" height="60"><use href="#film"/></svg><span>Yardım(Video/Kılavuz)</span></button>
          </div>

          <div class="d-flex flex-grow-1">
            <aside class="side">
              <h2 class="d-flex align-items-center"><span class="ic"></span>HESAP SEÇİMİ<span class="caret ms-auto"></span></h2>
              <ul class="first">
                <li><a href="#"><svg width="28" height="24"><use href="#men"/></svg>Cari Hesaplar</a></li>
                <li><a href="#"><svg width="28" height="28"><use href="#binder"/></svg>Hesap Planı</a></li>
              </ul>
              <h2 class="d-flex align-items-center"><span class="ic"><svg width="28" height="26"><use href="#pair"/></svg></span>HESAP EKSTRESİ<span class="caret ms-auto"></span></h2>
              <ul>
                <li><a href="#"><svg width="28" height="28"><use href="#sync"/></svg>Ekstre Hazırla</a></li>
                <li><a href="#"><svg width="28" height="24"><use href="#cols"/></svg>Filtre Ekranını Aç</a></li>
                <li class="dash">-------------------------</li>
                <li><a href="#"><svg width="28" height="28"><use href="#prn"/></svg>Ekstreyi Yazdır</a></li>
                <li><a href="#"><svg width="28" height="28"><use href="#prn"/><use href="#pen" x="11" y="9" width="17" height="17"/></svg>Stok Detaylı Yazdır</a></li>
                <li><a href="#"><svg width="28" height="28"><use href="#prn"/><circle cx="18" cy="8" r="8" fill="url(#gSun)"/></svg>TL + Alt Birim Yazdır</a></li>
                <li><a href="#"><svg width="28" height="28"><use href="#prn"/><use href="#ok" x="12" y="11" width="16" height="16"/></svg>Mutabakat Yazdır</a></li>
              </ul>
              <h2 class="d-flex align-items-center"><span class="ic"><svg width="28" height="28"><use href="#docs"/></svg></span>RAPORLAR<span class="caret ms-auto"></span></h2>
              <ul>
                <li><a href="#"><svg width="28" height="28"><use href="#fold"/></svg>Ödenmemiş Faturalar</a></li>
                <li><a href="#"><svg width="28" height="25"><use href="#cards"/></svg>Çek, Senet, K. Kartı</a></li>
                <li><a href="#"><svg width="28" height="28"><use href="#crate"/><use href="#lens" x="10" y="10" width="18" height="18"/></svg>Stok Mizan/Muavin</a></li>
                <li class="dash">-------------------------</li>
                <li><a href="#"><svg width="28" height="28"><use href="#cash"/><use href="#sync" x="13" y="14" width="15" height="14"/></svg>Vade Fark Analizi</a></li>
                <li><a href="#"><svg width="28" height="28"><use href="#note"/><use href="#pen" x="11" y="10" width="17" height="17"/></svg>Vade Takip Kayıt</a></li>
              </ul>
            </aside>
            <div class="strip"></div>
            <div class="box1 flex-grow-1 d-flex">
              <div class="strip"></div>
              <div class="box2 flex-grow-1 d-flex flex-column">
                <div class="bigs d-flex align-items-start">
                  <button class="big on"><span class="pic"><svg width="54" height="46" viewBox="0 0 54 46"><rect x="1" y="1" width="52" height="44" fill="#dd2410" stroke="#b8442f"/><path fill="#fff" opacity=".25" d="M1 1h52c-4 18-22 18-34 22C8 27 3 36 1 42z"/><circle cx="19" cy="22" r="12" fill="#fff"/><circle cx="22" cy="22" r="10" fill="#e03a26"/><path fill="#fff" d="M23 22l4-1 1-4 2 4 4-1-3 3 2 4-4-2-3 3v-4z"/></svg></span>TL Değerler</button>
                  <button class="big"><span class="pic"><svg width="44" height="52" viewBox="0 0 44 52"><path fill="#232323" d="M1 1h40l1 13h-3c-1-6-4-8-9-8H13l14 18L11 43h20c6 0 9-3 11-9h2l-2 17H1v-3l17-21L1 4z"/></svg></span>Alt Birimler</button>
                  <button class="big grp"><span class="pic"><svg width="54" height="46" viewBox="0 0 54 46"><rect width="54" height="46" fill="#fff"/><path stroke="#d3372c" stroke-width="4" d="M0 2h54M0 9h54M0 16h54M0 23h54M0 30h54M0 37h54M0 44h54"/><rect width="27" height="25" fill="#5c8fd0"/><path stroke="#e4f0ff" stroke-width="2" stroke-dasharray="2 3" d="M2 4h24M4 8h22M2 12h24M4 16h22M2 20h24"/><path fill="#fff" opacity=".25" d="M0 0h54c-3 15-20 18-32 21S4 32 0 38z"/></svg></span>Döviz Değ.</button>
                  <button class="big"><span class="pic"><svg width="54" height="46" viewBox="0 0 54 46"><rect x="1" y="1" width="52" height="44" fill="#2b86dc" stroke="#2a62a6"/><path fill="#fff" opacity=".3" d="M1 1h52c-4 18-22 18-34 22C8 27 3 36 1 42z"/><circle cx="27" cy="23" r="12" fill="none" stroke="#d8d03c" stroke-width="3" stroke-dasharray="2 4.280"/></svg></span>TL-Döviz Ç.</button>
                  <button class="big"><span class="pic"><svg width="54" height="56" viewBox="0 0 54 56"><g fill="none" stroke="#4c5054" stroke-width="8"><ellipse cx="14" cy="15" rx="8" ry="10"/><ellipse cx="39" cy="41" rx="8" ry="10"/><path d="M38 4L15 52"/></g><g fill="none" stroke="#c3c7ca" stroke-width="4"><ellipse cx="13" cy="14" rx="8" ry="10"/><ellipse cx="38" cy="40" rx="8" ry="10"/><path d="M37 4L14 51"/></g></svg></span>Kur Farkları</button>
                  <button class="big grp"><span class="pic"><svg width="56" height="54"><use href="#crate" x="2" y="1" width="44" height="50"/><use href="#ok" x="26" y="26" width="28" height="28"/></svg></span>Stok Değ.</button>
                  <fieldset class="fx"><legend>Rapor Döviz Cinsi</legend>
                    <div class="selwrap"><select aria-label="Rapor Döviz Cinsi"><option>Tümü</option></select>
                      <svg class="lft" width="28" height="28"><use href="#cash"/><path fill="url(#gGreen)" stroke="#156810" d="M1 12l4 5h5v-4l7 7-6 7v-4C4 24 0 19 1 12z"/></svg>
                      <span class="rgt"><svg width="13" height="9"><path fill="none" stroke="#222" stroke-width="2" d="M1 1l5 6 5-6"/></svg></span></div>
                  </fieldset>
                  <div class="sqs ms-auto d-flex">
                    <button class="sq" aria-label="Stok ara"><svg width="30" height="28"><use href="#crate" x="0" width="28" height="28"/><use href="#lens" x="11" y="9" width="19" height="19"/></svg></button>
                    <button class="sq" aria-label="Dışa aktar"><svg width="28" height="28"><use href="#page"/><path fill="url(#gRed)" stroke="#8c1010" d="M15 12h6v7h5l-8 8-8-8h5z"/></svg></button>
                    <button class="sq" aria-label="Önizleme"><svg width="28" height="28"><use href="#page"/><use href="#lens" x="9" y="9" width="19" height="19"/></svg></button>
                    <button class="sq" aria-label="Sırala"><svg width="30" height="28"><path fill="#2e86c4" stroke="#175a8c" d="M10 1l8 9h-5v8h5l-8 9-8-9h5v-8H2z"/><path fill="none" stroke="#555b62" stroke-width="2.500" d="M20 12c0-5 8-5 8 0 0 3-4 3-4 7M24 21v3"/></svg></button>
                  </div>
                </div>
                <div class="gtabs d-flex align-items-end">
                  <a href="#" class="gtab on d-flex align-items-center"><svg width="26" height="28"><use href="#page"/><use href="#pen" x="9" y="10" width="17" height="17"/></svg><span>Ekstre / Muavin Defter</span></a>
                  <a href="#" class="gtab d-flex align-items-center"><svg width="28" height="28"><use href="#calclk"/></svg>12 Aylık Mizan</a>
                  <a href="#" class="gtab wide d-flex align-items-center"><svg width="28" height="28"><use href="#calclk"/></svg><span>01.01.2021 &lt;-&gt; 31.12.2021 Arası Mizan</span></a>
                </div>
                <div class="gframe flex-grow-1 d-flex flex-column">
                  <div class="gbox flex-grow-1 d-flex flex-column">
                    <div class="d-flex flex-grow-1">
                      <div class="flex-grow-1 d-flex flex-column">
                        <table class="grid">
                          <colgroup><col style="width:20px"><col style="width:145px"><col style="width:9px"><col style="width:145px"><col style="width:145px"><col><col style="width:145px"><col style="width:8px"><col style="width:204px"><col style="width:204px"><col style="width:8px"><col style="width:205px"><col style="width:205px"></colgroup>
                          <thead><tr><th><svg class="mx-auto" width="12" height="12" viewBox="0 0 14 14"><use href="#star"/></svg></th><th>Fiş Tarihi</th><th></th><th>Belge Tarihi</th><th>Belge No</th><th>Açıklama</th><th>Vade Tarihi</th><th></th><th>Borç Tutar</th><th>Alacak Tutar</th><th></th><th>Borç Bakiye</th><th>Alacak Bakiye</th></tr></thead>
                          <tbody>
                            <tr class="sel"><td><svg class="mx-auto" width="8" height="14"><path fill="#16203c" d="M1 1l6 6-6 6z"/></svg></td><td class="d cur">01.01.2021</td><td></td><td class="d">01.01.2021</td><td class="r">1</td><td>Devreden Bakiye</td><td class="d">01.01.2021</td><td></td><td class="n">14.500,00</td><td></td><td></td><td class="n">14.500,00</td><td></td></tr>
                            <tr><td></td><td class="d">21.01.2021</td><td class="gap"></td><td class="d">21.01.2021</td><td class="r">20200010001</td><td>Satış Fatura</td><td class="d">21.02.2021</td><td class="gap"></td><td class="n b">2.875,00</td><td class="n g"></td><td class="gap"></td><td class="n b">17.375,00</td><td class="g"></td></tr>
                            <tr><td></td><td class="d">23.01.2021</td><td class="gap"></td><td class="d">23.01.2021</td><td class="r">20200000001</td><td>Satış Fatura</td><td class="d">23.02.2021</td><td class="gap"></td><td class="n b">7.245,00</td><td class="n g"></td><td class="gap"></td><td class="n b">24.620,00</td><td class="g"></td></tr>
                            <tr><td></td><td class="d">23.01.2021</td><td class="gap"></td><td class="d">23.01.2021</td><td class="r">20200010009</td><td>Satış Fatura</td><td class="d">23.02.2021</td><td class="gap"></td><td class="n b">3.450,00</td><td class="n g"></td><td class="gap"></td><td class="n b">28.070,00</td><td class="g"></td></tr>
                            <tr><td></td><td class="d">03.02.2021</td><td class="gap"></td><td class="d">03.02.2021</td><td class="r">2</td><td>Vinçsan Denetim San.Tic.Aş...</td><td class="d">03.02.2021</td><td class="gap"></td><td class="n b"></td><td class="n g">2.000,00</td><td class="gap"></td><td class="n b">26.070,00</td><td class="g"></td></tr>
                            <tr><td></td><td class="d">31.03.2021</td><td class="gap"></td><td class="d">31.03.2021</td><td class="r">20200010011</td><td>Satış Fatura</td><td class="d">31.03.2021</td><td class="gap"></td><td class="n b">10.350,00</td><td class="n g"></td><td class="gap"></td><td class="n b">36.420,00</td><td class="g"></td></tr>
                            <tr><td></td><td class="d">03.04.2021</td><td class="gap"></td><td class="d">03.04.2021</td><td class="r">102</td><td>Vinçsan Denetim San.Tic.Aş...</td><td class="d">05.03.2021</td><td class="gap"></td><td class="n b"></td><td class="n g">1.550,00</td><td class="gap"></td><td class="n b">34.870,00</td><td class="g"></td></tr>
                            <tr><td></td><td class="d">05.05.2021</td><td class="gap"></td><td class="d">05.05.2021</td><td class="r">10005</td><td>Torkum Petrol A.Ş.</td><td class="d">05.06.2021</td><td class="gap"></td><td class="n b"></td><td class="n g">1.500,00</td><td class="gap"></td><td class="n b">33.370,00</td><td class="g"></td></tr>
                            <tr><td></td><td class="d">14.05.2021</td><td class="gap"></td><td class="d">14.05.2021</td><td class="r">20200010013</td><td>Satış Fatura</td><td class="d">14.06.2021</td><td class="gap"></td><td class="n b">10.350,00</td><td class="n g"></td><td class="gap"></td><td class="n b">43.720,00</td><td class="g"></td></tr>
                          </tbody>
                        </table>
                        <div class="sum mt-auto d-flex align-items-center justify-content-end gap-2">
                          <div class="sumbox">48.770,00</div><div class="sumbox credit me-2">5.050,00</div><div class="sumbox">43.720,00</div><div class="sumbox"></div>
                        </div>
                      </div>
                      <div class="vscroll d-flex flex-column align-items-center gap-2">
                        <span class="tri up"></span>
                        <div class="vthumb"><svg width="12" height="12"><path stroke="#6f7788" stroke-width="2" d="M0 2h12M0 6h12M0 10h12"/></svg></div>
                        <span class="tri down"></span>
                      </div>
                    </div>
                    <div class="navrow d-flex">
                      <div class="navg d-flex align-items-center">
                        <div class="prev d-flex align-items-center justify-content-around"><svg width="17" height="12"><path fill="#6b6f78" d="M0 0h2v12H0zM9 0L3 6l6 6zM16 0l-6 6 6 6z"/></svg><svg width="14" height="12"><path fill="#6b6f78" d="M7 0L1 6l6 6zM14 0L8 6l6 6z"/></svg></div>
                        <span class="pos">0 -&gt; -1</span>
                        <div class="d-flex align-items-center justify-content-around flex-grow-1"><svg width="14" height="12"><use href="#tri2"/></svg><svg width="17" height="12"><path d="M0 0l7 6-7 6zM7 0l7 6-7 6zM15 0h2v12h-2z"/></svg><svg width="12" height="12" viewBox="0 0 14 14"><use href="#star"/></svg><svg width="16" height="16" color="#777"><path fill="#777" d="M0 0h4l-2 4z"/><use href="#star" x="4" y="3" width="12" height="12"/></svg></div>
                      </div>
                      <div class="hscroll flex-grow-1 d-flex align-items-center justify-content-between"><svg width="7" height="14"><path fill="#c6cad0" d="M7 1L1 7l6 6z"/></svg><svg width="7" height="14"><path fill="#c6cad0" d="M0 1l6 6-6 6z"/></svg></div>
                    </div>
                  </div>
                </div>
                <div class="hsplit"></div>
              </div>
            </div>
          </div>
        </div>
      </div>
    </div>

    <footer class="status d-flex align-items-center">
      <div class="seg border-0 ps-0" style="width:284px"><svg width="28" height="28"><use href="#globe"/></svg>İNTERNET AKSİYONLARI</div>
      <div class="seg" style="width:224px"><svg width="26" height="28"><use href="#db"/></svg>ORKA_0002_2021</div>
      <div class="seg" style="width:285px"><svg width="24" height="28"><use href="#cal"/></svg>01.01.2021 - 31.12.2021</div>
      <div class="seg" style="width:312px"><svg width="28" height="28"><use href="#bldg"/></svg>100000 - Merkez</div>
      <div class="seg flex-grow-1"><svg width="26" height="28"><use href="#page"/><use href="#pen" x="9" y="10" width="17" height="17"/></svg>Kemerkaya Ticaret Limited Şirketi</div>
      <div class="seg" style="width:40px"><svg width="28" height="26"><path fill="#f8fbfc" stroke="#7f8f9c" stroke-width="2" d="M1 2h26v22H1z"/><path stroke="#6c7c8a" stroke-width="3" d="M1 2h26"/><path stroke="#e05a4a" stroke-width="2" d="M22 2h4"/></svg></div>
      <div class="seg" style="width:40px"></div>
      <div class="seg" style="width:41px"></div>
      <div class="seg" style="width:181px">metin</div>
      <div class="seg keys" style="width:205px">CAPS <span class="lit">NUM</span> SCRL<svg width="26" height="24" class="ms-auto"><path fill="#eef2f7" stroke="#8ba0bf" stroke-width=".6" d="M20 2h4v4h-4zM20 10h4v4h-4zM20 18h4v4h-4zM11 10h4v4h-4zM11 18h4v4h-4zM2 18h4v4H2z"/></svg></div>
    </footer>
  </div>
</div>
</body>
</html>
